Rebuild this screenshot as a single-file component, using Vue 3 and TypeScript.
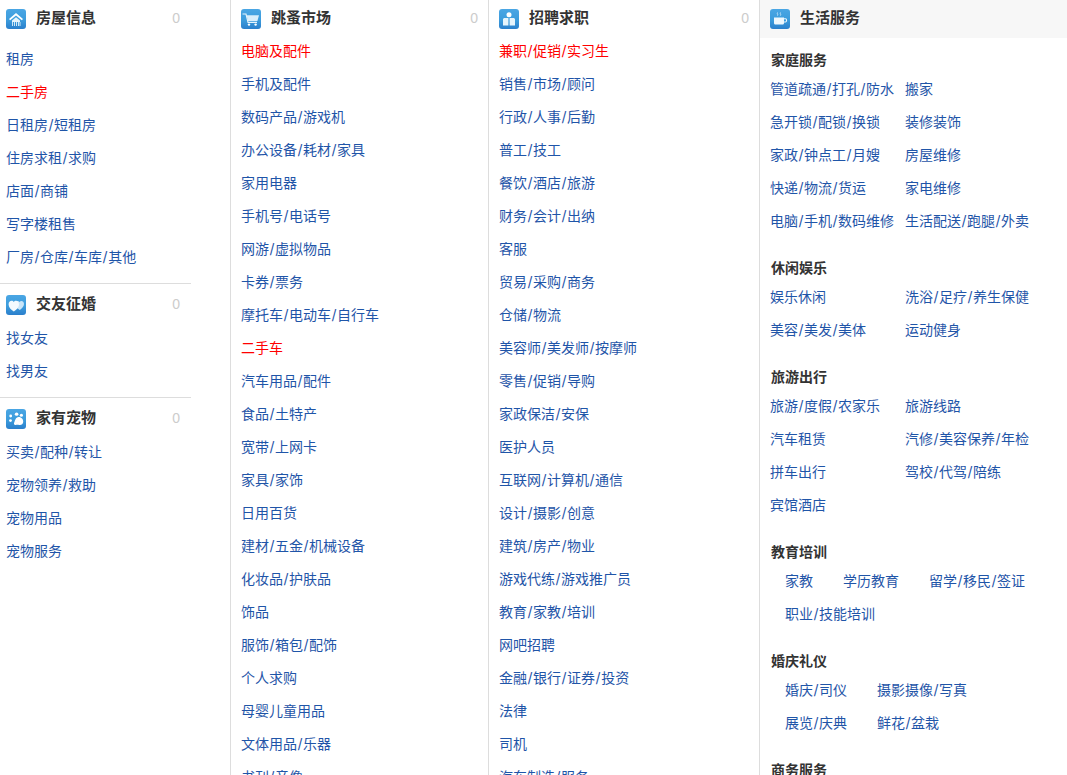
<template>
  <div class="page">
    <div class="col col-first">
      <div v-for="g in firstCol" :key="g.title" class="group">
        <div class="head">
          <svg class="icon" viewBox="0 0 20 20">
            <use :href="'#ic-' + g.icon" />
          </svg>
          <span class="head-title">{{ g.title }}</span>
          <span class="count">0</span>
        </div>
        <ul class="list">
          <li v-for="t in g.items" :key="t" :class="{ hot: hot.includes(t) }"><Label :text="t" /></li>
        </ul>
      </div>
    </div>

    <div class="col col-mid">
      <div class="head">
        <svg class="icon" viewBox="0 0 20 20"><use href="#ic-cart" /></svg>
        <span class="head-title">跳蚤市场</span>
        <span class="count">0</span>
      </div>
      <ul class="list">
        <li v-for="t in market" :key="t" :class="{ hot: hot.includes(t) }"><Label :text="t" /></li>
      </ul>
    </div>

    <div class="col col-job">
      <div class="head">
        <svg class="icon" viewBox="0 0 20 20"><use href="#ic-people" /></svg>
        <span class="head-title">招聘求职</span>
        <span class="count">0</span>
      </div>
      <ul class="list">
        <li v-for="t in jobs" :key="t" :class="{ hot: hot.includes(t) }"><Label :text="t" /></li>
      </ul>
    </div>

    <div class="col col-life">
      <div class="head head-life">
        <svg class="icon" viewBox="0 0 20 20"><use href="#ic-cup" /></svg>
        <span class="head-title">生活服务</span>
      </div>
      <div class="sections">
        <div v-for="s in services" :key="s.title" class="section">
          <h4>{{ s.title }}</h4>
          <div class="links" :class="s.layout">
            <a v-for="t in s.items" :key="t"><Label :text="t" /></a>
          </div>
        </div>
      </div>
    </div>

    <svg class="defs" width="0" height="0">
      <defs>
        <linearGradient id="tile" x1="0" y1="0" x2="0" y2="1">
          <stop offset="0" stop-color="#4aa6e4" />
          <stop offset="0.55" stop-color="#3c9cdc" />
          <stop offset="1" stop-color="#2a7fcc" />
        </linearGradient>
        <symbol id="ic-house" viewBox="0 0 20 20">
          <rect width="20" height="20" rx="3" fill="url(#tile)" />
          <path d="M10 4 3 10 4.2 11.2 10 6.4 15.8 11.2 17 10Z" fill="#fff" />
          <path d="M6 11.5 10 8.2 14 11.5V13H6Z" fill="#e6f4fc" />
          <path d="M6.5 13V17M8.5 13V17M10.5 13V17M12.5 13V17M14 13V17" stroke="#cfe8f8" stroke-width="1" />
        </symbol>
        <symbol id="ic-heart" viewBox="0 0 20 20">
          <rect width="20" height="20" rx="3" fill="url(#tile)" />
          <path d="M13.8 15C16 13.4 18 11.6 18 9 18 7.2 16.8 6 15.4 6 14.6 6 14 6.4 13.6 7 13.2 6.4 12.4 6 11.6 6 10 6 9 7.2 9 9 9 11.6 11.4 13.4 13.8 15Z" fill="#c9e5f8" />
          <path d="M7.8 16.5C5 14.6 2.6 12.4 2.6 9.4 2.6 7.2 4 5.8 5.6 5.8 6.6 5.8 7.3 6.3 7.8 7 8.3 6.3 9.1 5.8 10 5.8 11.7 5.8 13 7.2 13 9.4 13 12.4 10.6 14.6 7.8 16.5Z" fill="#f4fafe" />
        </symbol>
        <symbol id="ic-paw" viewBox="0 0 20 20">
          <rect width="20" height="20" rx="3" fill="url(#tile)" />
          <circle cx="4.7" cy="7" r="1.4" fill="#fff" />
          <circle cx="4.5" cy="11.6" r="1.4" fill="#fff" />
          <ellipse cx="10.6" cy="5.2" rx="1.8" ry="1.6" fill="#fff" />
          <ellipse cx="15.4" cy="6.2" rx="1.6" ry="1.5" fill="#fff" />
          <path d="M12.6 8C15.6 8 17.4 10.4 17.2 13 17 15.4 15 16.4 13 15.9 11.8 15.6 10.6 15.8 9.6 16 8.2 16.2 7.6 14.8 8.2 13.6 9 12 9.6 8 12.6 8Z" fill="#fff" />
        </symbol>
        <symbol id="ic-cart" viewBox="0 0 20 20">
          <rect width="20" height="20" rx="3" fill="url(#tile)" />
          <path d="M1.5 5H5L7 13.4H16" fill="none" stroke="#e8f5fd" stroke-width="1.1" />
          <path d="M5.6 6.2H18L16.4 12H7Z" fill="#d9eefb" />
          <circle cx="8" cy="15.6" r="1.2" fill="#fff" />
          <circle cx="14.6" cy="15.6" r="1.2" fill="#fff" />
        </symbol>
        <symbol id="ic-people" viewBox="0 0 20 20">
          <rect width="20" height="20" rx="3" fill="url(#tile)" />
          <circle cx="10" cy="5.8" r="2.5" fill="#fff" />
          <path d="M5 9H9.4V16.6H4V10Z" fill="#e6f4fc" />
          <path d="M15 9H10.6V16.6H16V10Z" fill="#e6f4fc" />
        </symbol>
        <symbol id="ic-cup" viewBox="0 0 20 20">
          <rect width="20" height="20" rx="3" fill="url(#tile)" />
          <path d="M4 8.5H14V14C14 15 13.2 15.6 12.4 15.6H5.6C4.8 15.6 4 15 4 14Z" fill="#eef7fd" />
          <path d="M14 9.8H15.6C16.9 9.8 16.9 13 15.4 13H14" fill="none" stroke="#eef7fd" stroke-width="1.1" />
          <path d="M7.5 3.5C6.6 4.5 8.4 5.3 7.5 6.6M10.5 3.5C9.6 4.5 11.4 5.3 10.5 6.6" fill="none" stroke="#d9eefb" stroke-width="0.8" />
        </symbol>
      </defs>
    </svg>
  </div>
</template>

<script setup lang="ts">
import { h } from 'vue';

// the slash sits a touch wider in the reference than in any installed font
const Label = (props: { text: string }) =>
  props.text.split('/').flatMap((p, i) => (i ? [h('span', { style: 'padding: 0 0.5px' }, '/'), p] : [p]));
Label.props = ['text'];

const hot = ['二手房', '电脑及配件', '二手车', '兼职/促销/实习生'];

const firstCol = [
  {
    title: '房屋信息',
    icon: 'house',
    items: ['租房', '二手房', '日租房/短租房', '住房求租/求购', '店面/商铺', '写字楼租售', '厂房/仓库/车库/其他'],
  },
  { title: '交友征婚', icon: 'heart', items: ['找女友', '找男友'] },
  { title: '家有宠物', icon: 'paw', items: ['买卖/配种/转让', '宠物领养/救助', '宠物用品', '宠物服务'] },
];

const market = [
  '电脑及配件', '手机及配件', '数码产品/游戏机', '办公设备/耗材/家具', '家用电器', '手机号/电话号',
  '网游/虚拟物品', '卡券/票务', '摩托车/电动车/自行车', '二手车', '汽车用品/配件', '食品/土特产',
  '宽带/上网卡', '家具/家饰', '日用百货', '建材/五金/机械设备', '化妆品/护肤品', '饰品',
  '服饰/箱包/配饰', '个人求购', '母婴儿童用品', '文体用品/乐器', '书刊/音像',
];

const jobs = [
  '兼职/促销/实习生', '销售/市场/顾问', '行政/人事/后勤', '普工/技工', '餐饮/酒店/旅游', '财务/会计/出纳',
  '客服', '贸易/采购/商务', '仓储/物流', '美容师/美发师/按摩师', '零售/促销/导购', '家政保洁/安保',
  '医护人员', '互联网/计算机/通信', '设计/摄影/创意', '建筑/房产/物业', '游戏代练/游戏推广员', '教育/家教/培训',
  '网吧招聘', '金融/银行/证券/投资', '法律', '司机', '汽车制造/服务',
];

const services = [
  {
    title: '家庭服务',
    layout: 'two',
    items: [
      '管道疏通/打孔/防水', '搬家', '急开锁/配锁/换锁', '装修装饰', '家政/钟点工/月嫂', '房屋维修',
      '快递/物流/货运', '家电维修', '电脑/手机/数码维修', '生活配送/跑腿/外卖',
    ],
  },
  { title: '休闲娱乐', layout: 'two', items: ['娱乐休闲', '洗浴/足疗/养生保健', '美容/美发/美体', '运动健身'] },
  {
    title: '旅游出行',
    layout: 'two',
    items: ['旅游/度假/农家乐', '旅游线路', '汽车租赁', '汽修/美容保养/年检', '拼车出行', '驾校/代驾/陪练', '宾馆酒店'],
  },
  { title: '教育培训', layout: 'wrap', items: ['家教', '学历教育', '留学/移民/签证', '职业/技能培训'] },
  { title: '婚庆礼仪', layout: 'wrap', items: ['婚庆/司仪', '摄影摄像/写真', '展览/庆典', '鲜花/盆栽'] },
  { title: '商务服务', layout: 'wrap', items: ['公司注册', '法律咨询'] },
];
</script>

<style scoped>
.page {
  display: flex;
  width: 1067px;
  height: 775px;
  overflow: hidden;
  background: #fff;
  font-family: Inter, "Noto Sans CJK SC", sans-serif;
  font-size: 14px;
  color: #1f55a8;
}
.col {
  flex: none;
  box-sizing: border-box;
  border-right: 1px solid #ddd;
}
.col-first {
  width: 231px;
}
.col-mid {
  width: 258px;
  padding: 0 10px;
}
.col-job {
  width: 271px;
  padding: 0 10px;
}
.col-life {
  flex: 1;
  border-right: 0;
}
.col-first .group {
  width: 191px;
  padding: 2px 11px 10px 6px;
  box-sizing: border-box;
  border-bottom: 1px solid #ddd;
}
.col-first .group:first-child {
  padding-top: 0;
}
.col-first .group:last-child {
  border-bottom: 0;
}
.col-first .list {
  padding-top: 1px;
}
.col-first .group:first-child .list {
  padding-top: 8px;
}
.head {
  display: flex;
  align-items: flex-start;
  height: 34px;
  padding-top: 9px;
  box-sizing: border-box;
}
.icon {
  flex: none;
  width: 20px;
  height: 20px;
  margin-right: 10px;
}
.head-title {
  font-size: 15px;
  font-weight: 700;
  line-height: 20px;
  color: #333;
  margin-top: -1px;
}
.count {
  margin-left: auto;
  font-family: "Liberation Sans", sans-serif;
  font-size: 14px;
  line-height: 20px;
  margin-top: -1px;
  color: #ccc;
}
.list {
  margin: 0;
  padding: 0;
  list-style: none;
}
.list li {
  height: 33px;
  line-height: 33px;
  white-space: nowrap;
}
.hot {
  color: #f00;
}
.head-life {
  height: 38px;
  padding-left: 10px;
  background: #f7f7f7;
}
.sections {
  padding: 9px 20px 0 10px;
}
.section + .section {
  margin-top: 18px;
}
h4 {
  margin: 0;
  padding-left: 1px;
  height: 25px;
  font-size: 14px;
  font-weight: 700;
  line-height: 25px;
  color: #333;
}
.links a {
  display: block;
  height: 33px;
  line-height: 33px;
  white-space: nowrap;
}
.two {
  display: grid;
  grid-template-columns: 135px 1fr;
}
.wrap {
  display: flex;
  flex-wrap: wrap;
  column-gap: 30px;
  padding-left: 15px;
}
.defs {
  position: absolute;
}
</style>

<style>
html,
body {
  margin: 0;
  background: #fff;
}
</style>
